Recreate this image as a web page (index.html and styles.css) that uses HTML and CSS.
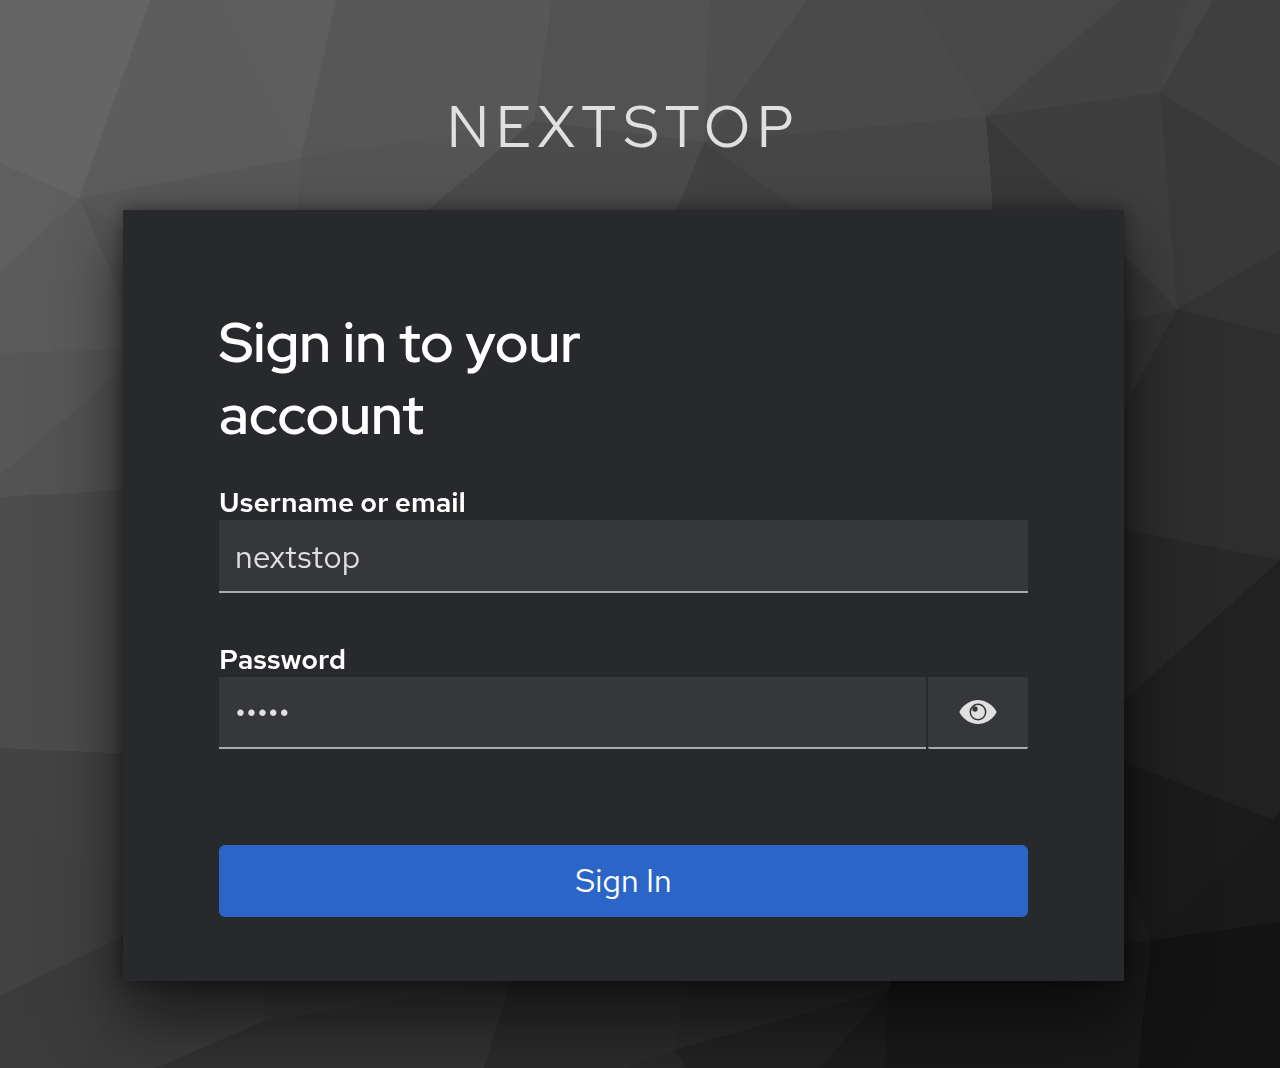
FILE: index.html
```html
<!DOCTYPE html>
<html lang="en">
<head>
  <meta charset="utf-8">
  <meta name="viewport" content="width=device-width, initial-scale=1">
  <title>Sign in to NEXTSTOP</title>
  <link rel="stylesheet" href="styles.css">
</head>
<body>
  <svg class="backdrop" viewBox="0 0 1280 1068" preserveAspectRatio="xMidYMid slice" shape-rendering="crispEdges" aria-hidden="true">
    <rect width="1280" height="1068" fill="#333"/>
    <!-- top edge -->
    <path fill="#656565" d="M0 0H150L79 198L0 163Z"/>
    <path fill="#5d5d5d" d="M150 0H225L301 158L79 198Z"/>
    <path fill="#5e5e5e" d="M225 0H336L301 158Z"/>
    <path fill="#575757" d="M336 0H378L534 121L301 158Z"/>
    <path fill="#585858" d="M378 0H552L534 121Z"/>
    <path fill="#525252" d="M552 0H709L704 142L534 121Z"/>
    <path fill="#4f4f4f" d="M709 0H807L704 142Z"/>
    <path fill="#4a4a4a" d="M807 0H918L986 116L704 142Z"/>
    <path fill="#484848" d="M918 0H1121L986 116Z"/>
    <path fill="#434343" d="M1121 0H1187L1160 92L986 116Z"/>
    <path fill="#454545" d="M1187 0H1213L1160 92Z"/>
    <path fill="#3f3f3f" d="M1213 0H1280V167L1160 92Z"/>
    <!-- behind the top of the card -->
    <path fill="#585858" d="M79 198L301 158L295 240H140Z"/>
    <path fill="#555" d="M301 158L534 121L400 234L295 240Z"/>
    <path fill="#4c4c4c" d="M534 121L704 142L665 240H392Z"/>
    <path fill="#434343" d="M704 142L709 240H665Z"/>
    <path fill="#424242" d="M704 142L840 240H709Z"/>
    <path fill="#464646" d="M704 142L986 116L995 240H840Z"/>
    <path fill="#393939" d="M986 116L1177 309L1100 330L995 240Z"/>
    <path fill="#3e3e3e" d="M986 116L1160 92L1177 309Z"/>
    <!-- right edge -->
    <path fill="#393939" d="M1160 92L1280 167V250L1177 309Z"/>
    <path fill="#343434" d="M1177 309L1280 250V335Z"/>
    <path fill="#343434" d="M1177 309L1100 329V453Z"/>
    <path fill="#2e2e2e" d="M1177 309L1280 335V560L1100 525V453Z"/>
    <path fill="#282828" d="M1100 525L1280 560L1100 722Z"/>
    <path fill="#212121" d="M1280 560V813L1272 819L1100 752V722Z"/>
    <path fill="#1b1b1b" d="M1100 752L1272 819L1151 940L1100 800Z"/>
    <path fill="#1e1e1e" d="M1100 800L1151 940L1100 948Z"/>
    <path fill="#191919" d="M1280 811V922L1151 940Z"/>
    <path fill="#131313" d="M1151 940L1280 922V1068H1138Z"/>
    <!-- bottom edge -->
    <path fill="#191919" d="M1100 947L1151 940L1138 1068H884L888 990L900 950Z"/>
    <path fill="#1d1d1d" d="M888 990L884 1068H820Z"/>
    <path fill="#222" d="M674 1050L888 990L820 1068H688Z"/>
    <path fill="#292929" d="M674 1050L690 950H900L888 990Z"/>
    <path fill="#282828" d="M674 1050L688 1068H626Z"/>
    <path fill="#2b2b2b" d="M520 950H690L674 1050L626 1068H484Z"/>
    <path fill="#323232" d="M265 1021L510 981L484 1068H273Z"/>
    <path fill="#363636" d="M265 1021V950H520L510 981Z"/>
    <path fill="#3a3a3a" d="M145 950H265V1021L155 1068H78Z"/>
    <path fill="#323232" d="M265 1021L273 1068H155Z"/>
    <!-- left edge -->
    <path fill="#5f5f5f" d="M0 163L79 198L0 273Z"/>
    <path fill="#5b5b5b" d="M0 273L79 198L140 340V349L0 353Z"/>
    <path fill="#555" d="M79 198L140 240V340Z"/>
    <path fill="#575757" d="M0 353L140 349V355L0 475Z"/>
    <path fill="#535353" d="M0 475L140 355V489L0 497Z"/>
    <path fill="#4c4c4c" d="M0 497L140 489V754L0 748Z"/>
    <path fill="#434343" d="M0 748L140 754V885L0 818Z"/>
    <path fill="#424242" d="M0 818L140 885V928L0 996Z"/>
    <path fill="#3b3b3b" d="M0 996L140 928V960L78 1068H0Z"/>
  </svg>

  <div class="page">
    <header class="brand">NEXTSTOP</header>
    <main class="card">
      <h1 class="card-title">Sign in to your account</h1>
      <form class="form">
        <div class="field">
          <label class="label" for="username">Username or email</label>
          <input class="input" id="username" name="username" type="text" value="nextstop" autocomplete="username">
        </div>
        <div class="field">
          <label class="label" for="password">Password</label>
          <div class="input-group">
            <input class="input input-password" id="password" name="password" type="password" value="admin" autocomplete="current-password">
            <button class="reveal" type="button" aria-label="Show password">
              <svg class="eye" viewBox="0 0 38 24" aria-hidden="true">
                <path fill="#e0e0e0" d="M.8 11C5 4 12 0 19 0S33 4 37.200 11Q37.800 12 37.200 13C33 20 26 24 19 24S5 20 .8 13Q.2 12 .8 11Z"/>
                <circle cx="19" cy="12" r="7.700" fill="none" stroke="#36373a" stroke-width="1.500"/>
                <circle cx="16" cy="9" r="2.700" fill="#36373a"/>
              </svg>
            </button>
          </div>
        </div>
        <button class="submit" type="submit">Sign In</button>
      </form>
    </main>
  </div>
</body>
</html>
```
FILE: styles.css
```css
* {
  box-sizing: border-box;
}

body {
  margin: 0;
  min-height: 100vh;
  background: #333;
  color: #fff;
  font-family: "Red Hat Text", Lato, sans-serif;
}

.backdrop {
  position: fixed;
  inset: 0;
  z-index: -1;
  width: 100%;
  height: 100%;
}

.page {
  display: flex;
  flex-direction: column;
  align-items: center;
  padding: 89px 33px 64px 0;
}

.brand {
  margin-bottom: 45px;
  color: #e0e0e0;
  font-size: 58px;
  line-height: 76px;
  letter-spacing: 6px;
}

.card {
  width: 100%;
  max-width: 1001px;
  padding: 96px 96px 64px;
  background: #28292c;
  box-shadow: 0 32px 64px rgba(3, 3, 3, 0.64), 0 0 16px rgba(3, 3, 3, 0.4);
}

.card-title {
  max-width: 400px;
  margin: 0 0 34px;
  font-family: "Red Hat Display", "Red Hat Text", Lato, sans-serif;
  font-size: 56px;
  font-weight: 600;
  line-height: 72px;
}

.form {
  display: flex;
  flex-direction: column;
  gap: 48px;
}

.field {
  display: flex;
  flex-direction: column;
}

.label {
  font-size: 28px;
  font-weight: 600;
  line-height: 36px;
}

.input {
  width: 100%;
  min-width: 0;
  height: 73px;
  padding: 2px 16px 0;
  border: 0;
  border-bottom: 2px solid #aaabac;
  border-radius: 0;
  outline: 0;
  background: #36373a;
  color: #e0e0e0;
  font-family: inherit;
  font-size: 32px;
}

.input-group {
  display: flex;
  gap: 2px;
}

.input-password,
.reveal {
  height: 72px;
}

.input-password {
  flex: 1;
  padding-top: 0;
}

.reveal {
  display: flex;
  flex: none;
  align-items: center;
  justify-content: center;
  width: 100px;
  padding: 0;
  border: 0;
  border-bottom: 2px solid #aaabac;
  border-radius: 0 0 2px 2px;
  background: #36373a;
}

.eye {
  width: 38px;
  height: 24px;
}

.submit {
  height: 72px;
  margin-top: 48px;
  padding: 0 0 2px;
  border: 0;
  border-radius: 6px;
  background: #2a65c7;
  color: #fff;
  font-family: inherit;
  font-size: 32px;
}
```
